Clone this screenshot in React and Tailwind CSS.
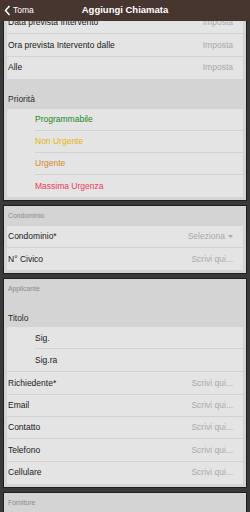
import React from 'react';

const Row = ({ label, value, caret, last }) => (
  <div
    className={`h-[22.3px] flex items-center justify-between bg-[#e4e4e4] pl-[1px] pr-[10px] ${
      last ? '' : 'border-b border-[#d2d2d2]'
    }`}
  >
    <span className="text-[8.5px] text-[#1a1a1a]">{label}</span>
    {value && (
      <span className="flex items-center gap-[3px] text-[8.5px] text-[#a9a9a9]">
        {value}
        {caret && (
          <svg width="5" height="3" viewBox="0 0 5 3">
            <path d="M0 0h5L2.5 3z" fill="#a9a9a9" />
          </svg>
        )}
      </span>
    )}
  </div>
);

const Option = ({ label, color, last }) => (
  <div className="h-[22px] bg-[#e4e4e4] pl-[28px]">
    <div
      className={`h-full flex items-center text-[8.5px] ${color} ${
        last ? '' : 'border-b border-[#d2d2d2]'
      }`}
    >
      {label}
    </div>
  </div>
);

const GroupHeader = ({ children, h }) => (
  <div className={`${h} flex items-end pb-[3px] pl-[1px] text-[8.5px] text-[#2a2a2a]`}>
    {children}
  </div>
);

const Card = ({ title, children }) => (
  <section className="mx-[3px] border border-[#1e1e1e] bg-[#d4d4d4] pl-[3px] pr-[3px] pb-[3px]">
    {title && (
      <div className="h-[20px] flex items-center pl-[1px] text-[6.8px] text-[#8a8a8a]">
        {title}
      </div>
    )}
    {children}
  </section>
);

const App = () => {
  return (
    <div className="w-[250px] h-[512px] bg-[#393939] flex flex-col overflow-hidden font-['Liberation_Sans',Arial,sans-serif]">
      {/* Top bar */}
      <header className="h-[21px] shrink-0 bg-[#47352f] grid grid-cols-[1fr_auto_1fr] items-center text-white">
        <div className="flex items-center pl-[4px] gap-[2px]">
          <svg width="7" height="11" viewBox="0 0 7 11">
            <path d="M5.5 1L1.5 5.5L5.5 10" stroke="white" strokeWidth="1.5" fill="none" />
          </svg>
          <span className="text-[8.5px]">Toma</span>
        </div>
        <h1 className="text-[9.5px] font-bold">Aggiungi Chiamata</h1>
        <div />
      </header>

      <div className="flex-1 overflow-hidden">
        <div className="-mt-[10px] flex flex-col gap-[4px]">
          <Card>
            <Row label="Data prevista Intervento" value="Imposta" />
            <Row label="Ora prevista Intervento dalle" value="Imposta" />
            <Row label="Alle" value="Imposta" last />
            <GroupHeader h="h-[30px]">Priorità</GroupHeader>
            <Option label="Programmabile" color="text-[#178a17]" />
            <Option label="Non Urgente" color="text-[#e6b40a]" />
            <Option label="Urgente" color="text-[#d7892a]" />
            <Option label="Massima Urgenza" color="text-[#e83a5c]" last />
          </Card>

          <Card title="Condominio">
            <Row label="Condominio*" value="Seleziona" caret />
            <Row label="N° Civico" value="Scrivi qui..." last />
          </Card>

          <Card title="Applicante">
            <GroupHeader h="h-[28px]">Titolo</GroupHeader>
            <Option label="Sig." color="text-[#1a1a1a]" />
            <Option label="Sig.ra" color="text-[#1a1a1a]" last />
            <div className="border-t border-[#d2d2d2]" />
            <Row label="Richiedente*" value="Scrivi qui..." />
            <Row label="Email" value="Scrivi qui..." />
            <Row label="Contatto" value="Scrivi qui..." />
            <Row label="Telefono" value="Scrivi qui..." />
            <Row label="Cellulare" value="Scrivi qui..." last />
          </Card>

          <Card title="Fornitore">
            <div className="h-[40px]" />
          </Card>
        </div>
      </div>
    </div>
  );
};

export default App;
